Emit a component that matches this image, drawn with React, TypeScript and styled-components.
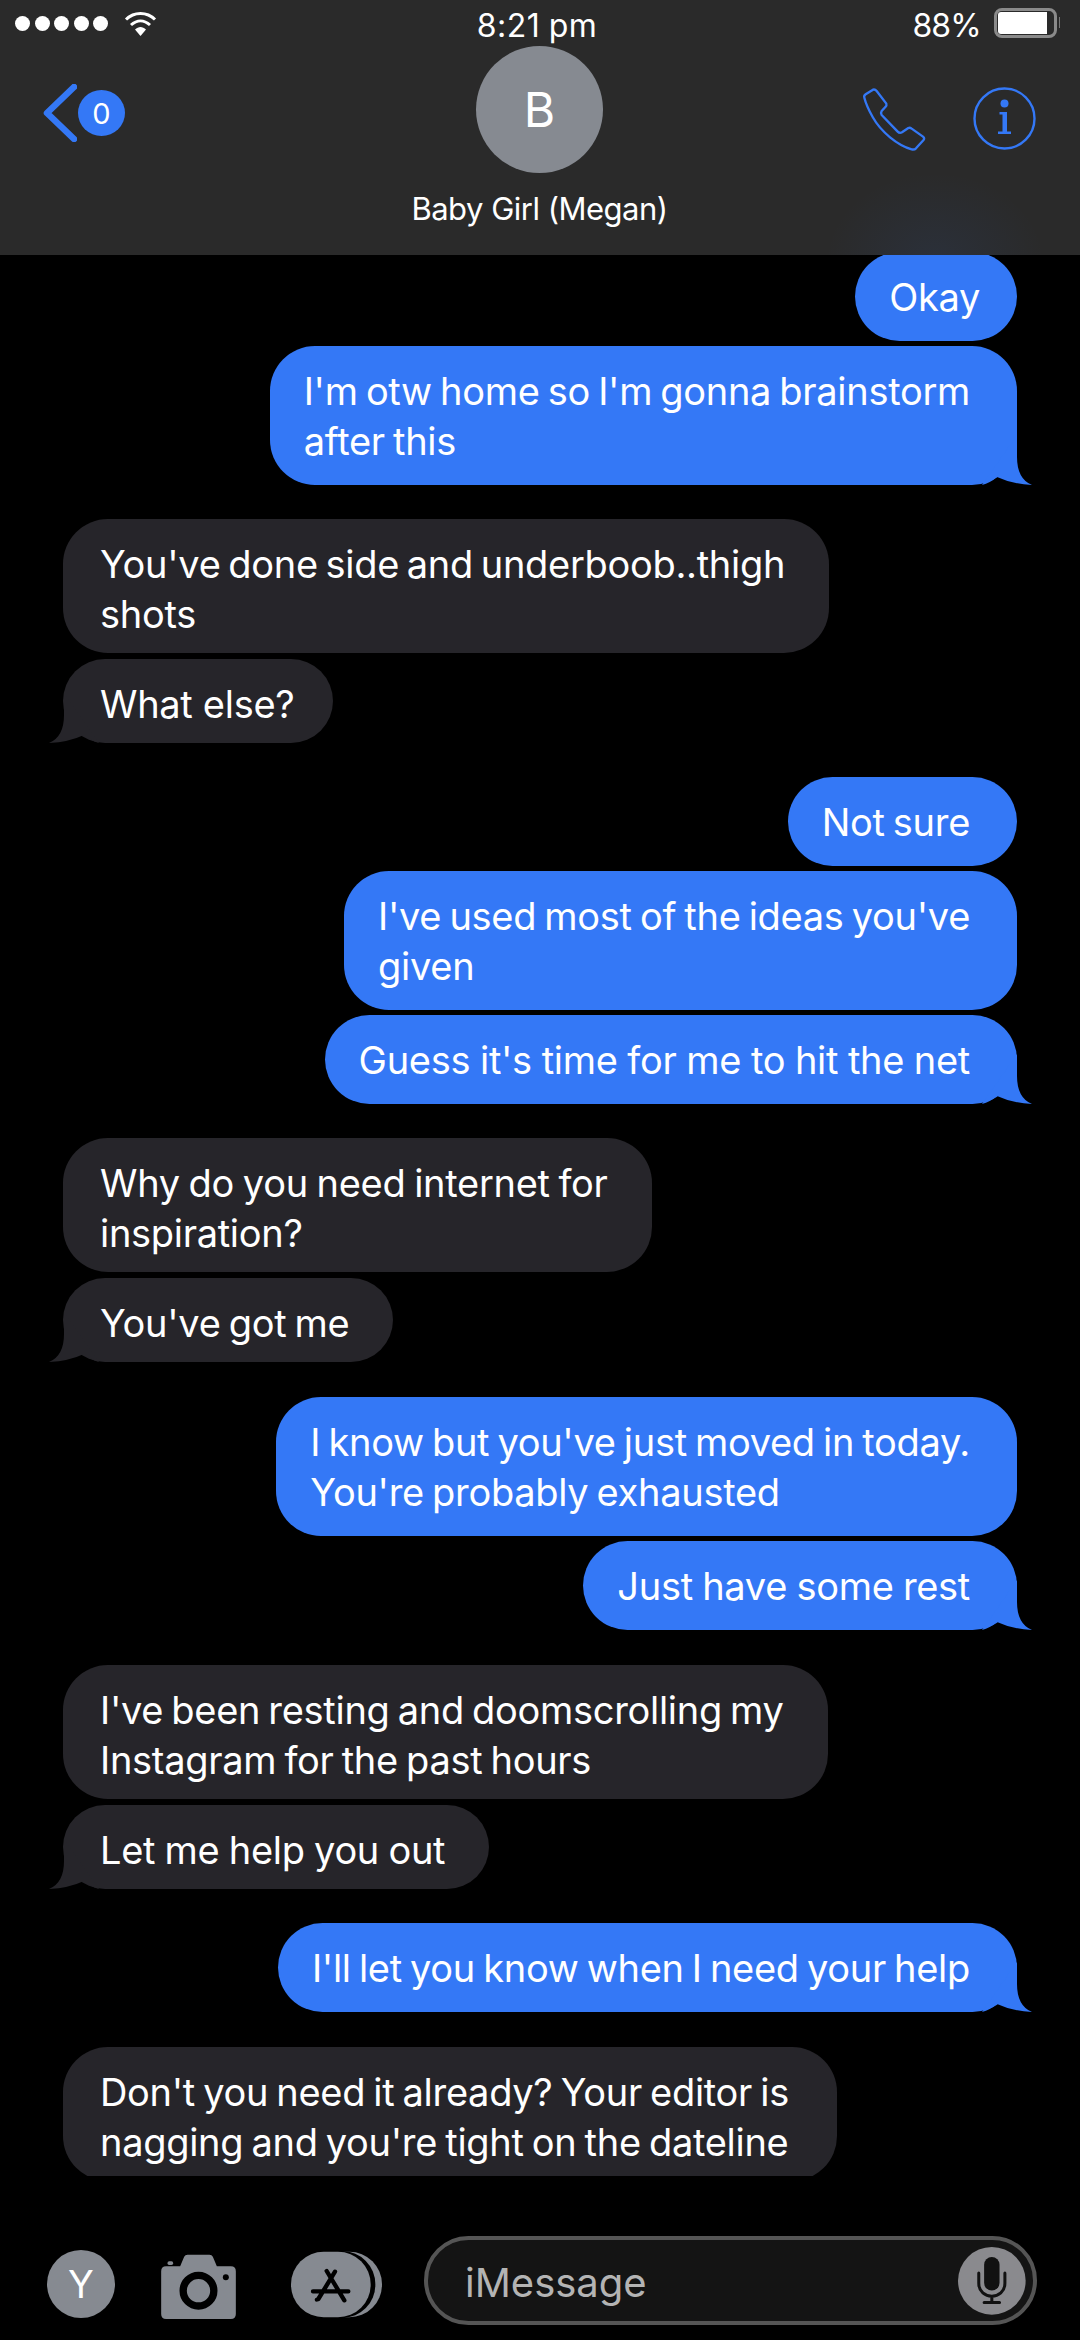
import styled, { createGlobalStyle } from "styled-components";

const GlobalStyle = createGlobalStyle`
html, body {
  margin: 0;
  background: #000;
}
* {
  box-sizing: border-box;
}
`;

const Page = styled.div`
  width: 1080px;
  height: 2340px;
  display: flex;
  flex-direction: column;
  overflow: hidden;
  background: #000;
  color: #fff;
  font-family: Inter, "Liberation Sans", sans-serif;
`;

const Header = styled.header`
  height: 255px;
  flex: none;
  background:
    radial-gradient(ellipse 110px 90px at 935px 262px, rgba(52, 120, 246, 0.08), transparent),
    #2a2a2a;
`;

const StatusBar = styled.div`
  height: 46px;
  padding: 4px 21px 0 15px;
  display: grid;
  grid-template-columns: 1fr auto 1fr;
  align-items: center;
`;

const Signal = styled.div`
  display: flex;
  align-items: center;
  margin-top: -4px;
`;

const Dot = styled.span`
  width: 15px;
  height: 15px;
  margin-right: 4.5px;
  border-radius: 50%;
  background: #fff;
`;

const Wifi = styled.svg`
  width: 33px;
  height: 26px;
  margin-left: 11px;
`;

const Clock = styled.div`
  font-size: 32px;
  letter-spacing: 0.5px;
  word-spacing: -1px;
`;

const BatteryWrap = styled.div`
  display: flex;
  align-items: center;
  justify-content: flex-end;
  font-size: 32px;
  letter-spacing: -0.8px;
`;

const Battery = styled.div`
  position: relative;
  width: 63px;
  height: 30px;
  margin: -4px 2px 0 13px;
  padding: 1px;
  border: 3px solid #8a8a8a;
  border-radius: 8px;
`;

const BatteryFill = styled.div`
  width: 89%;
  height: 100%;
  background: #fff;
  border-radius: 3px 0 0 3px;
`;

const BatteryNib = styled.span`
  position: absolute;
  top: 6px;
  right: -6px;
  width: 1.5px;
  height: 11px;
  background: #777;
`;

const Nav = styled.div`
  display: grid;
  grid-template-columns: 1fr auto 1fr;
  padding: 0 44px 0 43px;
`;

const Back = styled.div`
  display: flex;
  align-items: center;
  height: 58px;
  margin-top: 38px;
`;

const Chevron = styled.svg`
  width: 34px;
  height: 58px;
  margin-right: 1px;
`;

const Badge = styled.div`
  width: 47px;
  height: 46px;
  display: flex;
  align-items: center;
  justify-content: center;
  border-radius: 50%;
  background: #3478f6;
  font-size: 29px;
`;

const Contact = styled.div`
  display: flex;
  flex-direction: column;
  align-items: center;
`;

const Avatar = styled.div`
  width: 127px;
  height: 127px;
  display: flex;
  align-items: center;
  justify-content: center;
  border-radius: 50%;
  background: #868a91;
  font-size: 48px;
`;

const Name = styled.div`
  margin-top: 16px;
  font-size: 31px;
  line-height: 40px;
  letter-spacing: -0.5px;
`;

const Actions = styled.div`
  display: flex;
  justify-content: flex-end;
  align-items: flex-start;
  gap: 46px;
  margin-top: 41px;
`;

const Thread = styled.main`
  height: 1921px;
  flex: none;
  overflow: hidden;
  padding: 0 63px;
  display: flex;
  flex-direction: column;
`;

const Bubble = styled.div<{ $sent?: boolean; $top: number; $pad?: number; $words?: number }>`
  position: relative;
  flex: none;
  align-self: ${(p) => (p.$sent ? "flex-end" : "flex-start")};
  margin-top: ${(p) => p.$top}px;
  padding: ${(p) =>
    p.$sent
      ? `20px ${p.$pad ?? 47}px 19px 34px`
      : `20px ${p.$pad ?? 44}px 14px 37px`};
  border-radius: 45px;
  background: ${(p) => (p.$sent ? "#3478f6" : "#26252a")};
  font-size: 38px;
  line-height: 50px;
  letter-spacing: -0.3px;
  word-spacing: ${(p) => p.$words ?? -2.2}px;
  white-space: pre-line;
`;

const Tail = styled.svg<{ $sent?: boolean }>`
  position: absolute;
  bottom: 0;
  width: 50px;
  height: 50px;
  ${(p) => (p.$sent ? "right: -15px;" : "left: -14px; transform: scaleX(-1);")}
  fill: ${(p) => (p.$sent ? "#3478f6" : "#26252a")};
`;

const Composer = styled.footer`
  flex: 1;
  display: flex;
  align-items: flex-start;
  padding: 60px 43px 0 47px;
`;

const UserChip = styled.div`
  width: 68px;
  height: 68px;
  margin-top: 14px;
  display: flex;
  align-items: center;
  justify-content: center;
  border-radius: 50%;
  background: #868a91;
  font-size: 38px;
`;

const CameraIcon = styled.svg`
  width: 75px;
  height: 66px;
  margin: 17px 0 0 46px;
`;

const StoreIcon = styled.svg`
  width: 91px;
  height: 67px;
  margin: 15px 0 0 55px;
`;

const InputBox = styled.div`
  width: 613px;
  height: 89px;
  margin-left: 42px;
  padding: 0 7px 0 37px;
  display: flex;
  align-items: center;
  justify-content: space-between;
  border: 4px solid #555;
  border-radius: 45px;
  background: #141414;
`;

const Placeholder = styled.span`
  padding-top: 4px;
  font-size: 40px;
  color: #b4b4b4;
`;

const MicIcon = styled.svg`
  width: 68px;
  height: 68px;
`;

type Message = {
  text: string;
  sent?: boolean;
  top: number;
  tail?: boolean;
  pad?: number;
  words?: number;
};

const messages: Message[] = [
  { text: "Okay", sent: true, top: -3, pad: 37 },
  { text: "I'm otw home so I'm gonna brainstorm\nafter this", sent: true, top: 5, tail: true },
  { text: "You've done side and underboob..thigh\nshots", top: 34, words: -2.6 },
  { text: "What else?", top: 6, tail: true, pad: 39, words: 0 },
  { text: "Not sure", sent: true, top: 34 },
  { text: "I've used most of the ideas you've\ngiven", sent: true, top: 5 },
  { text: "Guess it's time for me to hit the net", sent: true, top: 5, tail: true, words: -0.6 },
  { text: "Why do you need internet for\ninspiration?", top: 34, words: -1.6 },
  { text: "You've got me", top: 6, tail: true },
  { text: "I know but you've just moved in today.\nYou're probably exhausted", sent: true, top: 35 },
  { text: "Just have some rest", sent: true, top: 5, tail: true, words: -1 },
  { text: "I've been resting and doomscrolling my\nInstagram for the past hours", top: 35 },
  { text: "Let me help you out", top: 6, tail: true, words: -1 },
  { text: "I'll let you know when I need your help", sent: true, top: 34, tail: true },
  { text: "Don't you need it already? Your editor is\nnagging and you're tight on the dateline", top: 35, pad: 48 },
];

export default function App() {
  return (
    <Page>
      <GlobalStyle />
      <Header>
        <StatusBar>
          <Signal>
            {[0, 1, 2, 3, 4].map((i) => (
              <Dot key={i} />
            ))}
            <Wifi viewBox="0 0 33 26">
              <path d="M2 9.5C10 1.5 23 1.5 31 9.5M7 15C13 9.5 20 9.5 26 15" fill="none" stroke="#fff" strokeWidth="3" />
              <path d="M11 19.5C14.5 16 18.5 16 22 19.5L16.5 26Z" fill="#fff" />
            </Wifi>
          </Signal>
          <Clock>8:21 pm</Clock>
          <BatteryWrap>
            88%
            <Battery>
              <BatteryFill />
              <BatteryNib />
            </Battery>
          </BatteryWrap>
        </StatusBar>
        <Nav>
          <Back>
            <Chevron viewBox="0 0 34 58">
              <path d="M31 3L4 29L31 55" fill="none" stroke="#3478f6" strokeWidth="6.5" strokeLinecap="round" strokeLinejoin="round" />
            </Chevron>
            <Badge>0</Badge>
          </Back>
          <Contact>
            <Avatar>B</Avatar>
            <Name>Baby Girl (Megan)</Name>
          </Contact>
          <Actions>
            <svg width="66" height="65" viewBox="30 30 198 195">
              <path
                d="M40 62Q38 56 44 52L66 38Q72 36 77 42L106 80Q108 86 103 90L92 102Q88 108 92 114L140 164Q146 170 153 166L172 153Q177 151 182 155L216 179Q222 184 217 190L195 214Q190 219 182 217C140 205 90 165 65 120C55 102 45 82 40 62Z"
                fill="none"
                stroke="#3478f6"
                strokeWidth="7"
                strokeLinejoin="round"
              />
            </svg>
            <svg width="63" height="63" viewBox="0 0 63 63">
              <circle cx="31.5" cy="31.5" r="30" fill="none" stroke="#3478f6" strokeWidth="2.4" />
              <circle cx="31.5" cy="16.5" r="4" fill="#3478f6" />
              <path d="M26.5 25H34V44.5H38V47H25V44.5H29.5V27.5H26.5Z" fill="#3478f6" />
            </svg>
          </Actions>
        </Nav>
      </Header>
      <Thread>
        {messages.map((m) => (
          <Bubble key={m.text} $sent={m.sent} $top={m.top} $pad={m.pad} $words={m.words}>
            {m.text}
            {m.tail && (
              <Tail $sent={m.sent} viewBox="0 0 50 50">
                <path d="M35 0V22Q35 44 50 50Q30 49 15 42Q8 48 0 50Z" />
              </Tail>
            )}
          </Bubble>
        ))}
      </Thread>
      <Composer>
        <UserChip>Y</UserChip>
        <CameraIcon viewBox="393 65 224 198">
          <path
            d="M393 120Q393 105 408 105H450L462 76Q465 70 472 70H538Q545 70 548 76L560 105H602Q617 105 617 120V248Q617 263 602 263H408Q393 263 393 248Z"
            fill="#868a91"
          />
          <rect x="412" y="90" width="17" height="11" rx="5" fill="#868a91" />
          <circle cx="505" cy="178" r="46" fill="none" stroke="#000" strokeWidth="22" />
          <circle cx="587" cy="138" r="9" fill="#000" />
        </CameraIcon>
        <StoreIcon viewBox="0 0 273 201">
          <rect x="68" y="2" width="205" height="197" rx="98" fill="#868a91" />
          <rect x="58" y="1" width="195" height="199" rx="98" fill="#000" />
          <rect x="0" y="2" width="239" height="197" rx="98" fill="#868a91" />
          <path d="M132 62L82 144M107 60L160 148M66 121H172" fill="none" stroke="#000" strokeWidth="13" strokeLinecap="round" />
          <circle cx="77" cy="146" r="6" fill="#000" />
        </StoreIcon>
        <InputBox>
          <Placeholder>iMessage</Placeholder>
          <MicIcon viewBox="57 52 203 203">
            <circle cx="158" cy="153" r="101" fill="#8a8a8e" />
            <rect x="135" y="82" width="46" height="100" rx="23" fill="#111" />
            <path d="M119 130V160C119 212 197 212 197 160V130M158 200V218M135 218H181" fill="none" stroke="#111" strokeWidth="9" strokeLinecap="round" />
          </MicIcon>
        </InputBox>
      </Composer>
    </Page>
  );
}
